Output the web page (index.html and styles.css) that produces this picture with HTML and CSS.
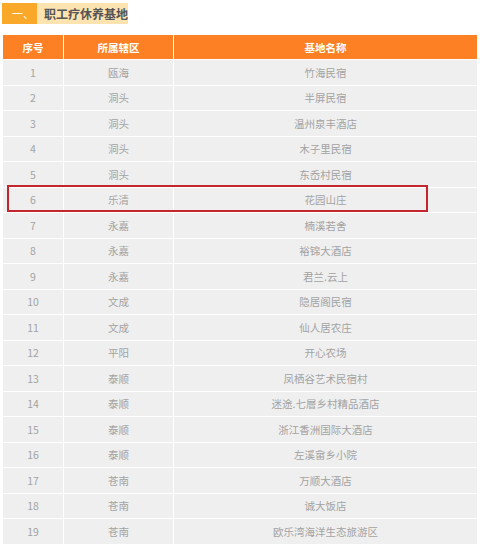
FILE: index.html
```html
<!DOCTYPE html>
<html lang="zh">
<head>
<meta charset="utf-8">
<link rel="stylesheet" href="styles.css">
</head>
<body>
<div class="title">
  <span class="title-num">一、</span>
  <span class="title-text">职工疗休养基地</span>
</div>
<div class="wrap">
<table class="grid">
  <colgroup><col class="c1"><col class="c2"><col class="c3"></colgroup>
  <thead>
    <tr><th>序号</th><th>所属辖区</th><th>基地名称</th></tr>
  </thead>
  <tbody>
    <tr><td>1</td><td>瓯海</td><td>竹海民宿</td></tr>
    <tr><td>2</td><td>洞头</td><td>半屏民宿</td></tr>
    <tr><td>3</td><td>洞头</td><td>温州泉丰酒店</td></tr>
    <tr><td>4</td><td>洞头</td><td>木子里民宿</td></tr>
    <tr><td>5</td><td>洞头</td><td>东岙村民宿</td></tr>
    <tr><td>6</td><td>乐清</td><td>花园山庄</td></tr>
    <tr><td>7</td><td>永嘉</td><td>楠溪若舍</td></tr>
    <tr><td>8</td><td>永嘉</td><td>裕锦大酒店</td></tr>
    <tr><td>9</td><td>永嘉</td><td>君兰.云上</td></tr>
    <tr><td>10</td><td>文成</td><td>隐居阁民宿</td></tr>
    <tr><td>11</td><td>文成</td><td>仙人居农庄</td></tr>
    <tr><td>12</td><td>平阳</td><td>开心农场</td></tr>
    <tr><td>13</td><td>泰顺</td><td>凤栖谷艺术民宿村</td></tr>
    <tr><td>14</td><td>泰顺</td><td>迷途.七層乡村精品酒店</td></tr>
    <tr><td>15</td><td>泰顺</td><td>浙江香洲国际大酒店</td></tr>
    <tr><td>16</td><td>泰顺</td><td>左溪畲乡小院</td></tr>
    <tr><td>17</td><td>苍南</td><td>万顺大酒店</td></tr>
    <tr><td>18</td><td>苍南</td><td>诚大饭店</td></tr>
    <tr><td>19</td><td>苍南</td><td>欧乐湾海洋生态旅游区</td></tr>
  </tbody>
</table>
<div class="highlight"></div>
</div>
</body>
</html>
```

FILE: styles.css
```css
html, body {
  margin: 0;
  padding: 0;
  background: #ffffff;
  font-family: "Noto Sans CJK SC", "Noto Sans", sans-serif;
}
body {
  padding: 3px 0 0 2px;
}
.title {
  display: flex;
  height: 21px;
  align-items: stretch;
}
.title-num {
  width: 35px;
  background: #f9a82a;
  color: #ffffff;
  font-size: 11px;
  line-height: 21px;
  padding-left: 10px;
  box-sizing: border-box;
}
.title-text {
  width: 91px;
  background: #fde3b0;
  color: #555555;
  font-size: 12px;
  font-weight: bold;
  line-height: 21px;
  padding-left: 7px;
  box-sizing: border-box;
}
.wrap {
  position: relative;
  margin-top: 10px;
}
.grid {
  border-collapse: separate;
  border-spacing: 1px;
  width: 476px;
  table-layout: fixed;
  background: #ffffff;
}
.c1 { width: 60px; }
.c2 { width: 109px; }
.c3 { width: auto; }
.grid th {
  background: #fd8024;
  color: #ffffff;
  font-size: 10.5px;
  font-weight: bold;
  height: 24px;
  padding: 0;
  text-align: center;
}
.grid td {
  background: #efefef;
  color: #a3a3a3;
  font-size: 10.5px;
  height: 24.5px;
  padding: 0;
  text-align: center;
}
.highlight {
  position: absolute;
  left: 5px;
  top: 151px;
  width: 417px;
  height: 23px;
  border: 2px solid #c3262c;
}
```
